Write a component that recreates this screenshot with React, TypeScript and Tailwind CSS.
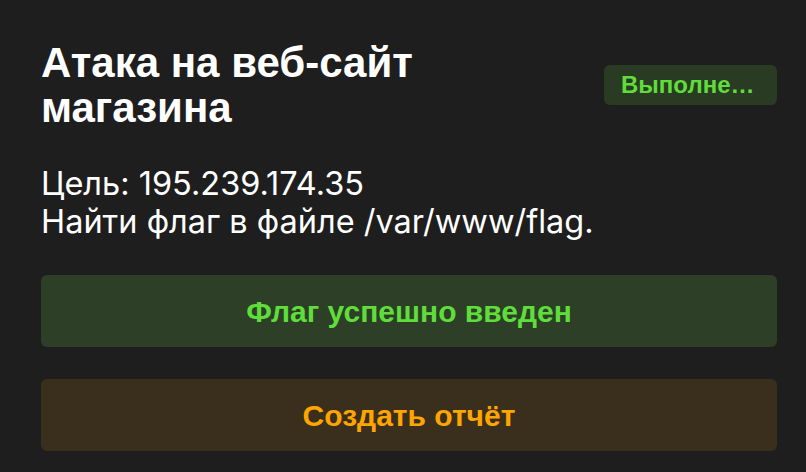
import React from "react";

const TaskCard = () => (
  <div className="min-h-[472px] w-[806px] bg-[#1e1e1e] pl-[41px] pr-[29px] pt-[40px]">
    <div className="flex items-center justify-between gap-6">
      <h1 className="font-['Liberation_Sans',sans-serif] text-[42px] font-bold leading-[45px] text-white">
        Атака на веб-сайт
        <br />
        магазина
      </h1>
      <span className="w-[173px] shrink-0 truncate rounded-md bg-[#2a3b23] pl-[17px] pr-[20px] py-[6px] font-['Liberation_Sans',sans-serif] text-[24px] font-bold leading-[28px] text-[#5fdd3b]">
        Выполнено
      </span>
    </div>
    <div className="mt-[35px] font-['Inter',sans-serif] text-[32.5px] leading-[38px] text-white">
      <p>Цель: 195.239.174.35</p>
      <p>Найти флаг в файле /var/www/flag.</p>
    </div>
    <div className="mt-[34px] flex flex-col gap-8">
      <button className="h-[72px] w-full rounded-md bg-[#2d3f26] font-['Liberation_Sans',sans-serif] text-[30px] font-bold text-[#5fdd3b]">
        Флаг успешно введен
      </button>
      <button className="h-[72px] w-full rounded-md bg-[#3a2f1d] font-['Liberation_Sans',sans-serif] text-[30px] font-bold text-[#ffa500]">
        Создать отчёт
      </button>
    </div>
  </div>
);

export default function App() {
  return <TaskCard />;
}
